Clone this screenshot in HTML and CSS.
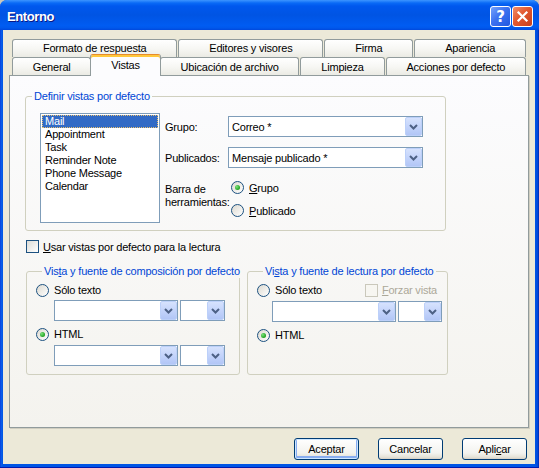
FILE: index.html
```html
<!DOCTYPE html>
<html lang="es">
<head>
    <meta charset="UTF-8">
    <title>Entorno</title>
    <link rel="stylesheet" href="styles.css">
</head>
<body>
    <div class="window">
        <div class="titlebar">
            <span class="title">Entorno</span>
            <div class="caption-buttons">
                <span class="cap-btn help">?</span>
                <span class="cap-btn close">
                    <svg width="13" height="13" viewBox="0 0 13 13"><path d="M2.5 2.5 L10.5 10.5 M10.5 2.5 L2.5 10.5" stroke="#fff" stroke-width="2.2" stroke-linecap="square"/></svg>
                </span>
            </div>
        </div>

        <div class="client">
            <div class="tabs">
                <div class="tab-row back">
                    <div class="tab">Formato de respuesta</div>
                    <div class="tab">Editores y visores</div>
                    <div class="tab">Firma</div>
                    <div class="tab">Apariencia</div>
                </div>
                <div class="tab-row">
                    <div class="tab">General</div>
                    <div class="tab active">Vistas</div>
                    <div class="tab">Ubicación de archivo</div>
                    <div class="tab">Limpieza</div>
                    <div class="tab">Acciones por defecto</div>
                </div>
            </div>

            <div class="page">
                <fieldset class="group group-views">
                    <legend>Definir vistas por defecto</legend>
                    <div class="views-body">
                        <ul class="listbox">
                            <li class="selected">Mail</li>
                            <li>Appointment</li>
                            <li>Task</li>
                            <li>Reminder Note</li>
                            <li>Phone Message</li>
                            <li>Calendar</li>
                        </ul>
                        <div class="view-fields">
                            <span class="field-label">Grupo:</span>
                            <div class="combo">
                                <span class="combo-text">Correo *</span>
                                <span class="combo-arrow"><svg width="9" height="6" viewBox="0 0 9 6"><path d="M1 1 L4.5 4.5 L8 1" stroke="#4D6185" stroke-width="2" fill="none"/></svg></span>
                            </div>
                            <span class="field-label">Publicados:</span>
                            <div class="combo">
                                <span class="combo-text">Mensaje publicado *</span>
                                <span class="combo-arrow"><svg width="9" height="6" viewBox="0 0 9 6"><path d="M1 1 L4.5 4.5 L8 1" stroke="#4D6185" stroke-width="2" fill="none"/></svg></span>
                            </div>
                            <span class="field-label toolbar-label">Barra de<br>herramientas:</span>
                            <div class="radio-stack">
                                <div class="option"><span class="radio checked"></span><u>G</u>rupo</div>
                                <div class="option"><span class="radio"></span><u>P</u>ublicado</div>
                            </div>
                        </div>
                    </div>
                </fieldset>

                <div class="option check-row"><span class="checkbox"></span><u>U</u>sar vistas por defecto para la lectura</div>

                <div class="font-groups">
                    <fieldset class="group group-compose">
                        <legend>Vis<u>t</u>a y fuente de composición por defecto</legend>
                        <div class="option radio-row"><span class="radio"></span>Sólo texto</div>
                        <div class="combo-row">
                            <div class="combo combo-font"><span class="combo-text"></span><span class="combo-arrow"><svg width="9" height="6" viewBox="0 0 9 6"><path d="M1 1 L4.5 4.5 L8 1" stroke="#4D6185" stroke-width="2" fill="none"/></svg></span></div>
                            <div class="combo combo-size"><span class="combo-text"></span><span class="combo-arrow"><svg width="9" height="6" viewBox="0 0 9 6"><path d="M1 1 L4.5 4.5 L8 1" stroke="#4D6185" stroke-width="2" fill="none"/></svg></span></div>
                        </div>
                        <div class="option radio-row second"><span class="radio checked"></span>HTML</div>
                        <div class="combo-row">
                            <div class="combo combo-font"><span class="combo-text"></span><span class="combo-arrow"><svg width="9" height="6" viewBox="0 0 9 6"><path d="M1 1 L4.5 4.5 L8 1" stroke="#4D6185" stroke-width="2" fill="none"/></svg></span></div>
                            <div class="combo combo-size"><span class="combo-text"></span><span class="combo-arrow"><svg width="9" height="6" viewBox="0 0 9 6"><path d="M1 1 L4.5 4.5 L8 1" stroke="#4D6185" stroke-width="2" fill="none"/></svg></span></div>
                        </div>
                    </fieldset>

                    <fieldset class="group group-read">
                        <legend>Vi<u>s</u>ta y fuente de lectura por defecto</legend>
                        <div class="option radio-row">
                            <span class="radio"></span>Sólo texto
                            <span class="force"><span class="checkbox disabled"></span><u>F</u>orzar vista</span>
                        </div>
                        <div class="combo-row">
                            <div class="combo combo-font"><span class="combo-text"></span><span class="combo-arrow"><svg width="9" height="6" viewBox="0 0 9 6"><path d="M1 1 L4.5 4.5 L8 1" stroke="#4D6185" stroke-width="2" fill="none"/></svg></span></div>
                            <div class="combo combo-size narrow"><span class="combo-text"></span><span class="combo-arrow"><svg width="9" height="6" viewBox="0 0 9 6"><path d="M1 1 L4.5 4.5 L8 1" stroke="#4D6185" stroke-width="2" fill="none"/></svg></span></div>
                        </div>
                        <div class="option radio-row second"><span class="radio checked"></span>HTML</div>
                    </fieldset>
                </div>
            </div>

            <div class="buttons">
                <button class="btn default">Aceptar</button>
                <button class="btn">Cancelar</button>
                <button class="btn">Apli<u>c</u>ar</button>
            </div>
        </div>
    </div>
</body>
</html>
```

FILE: styles.css
```css
* {
    box-sizing: border-box;
}
body {
    margin: 0;
    background: #c9c7bd;
    font-family: "Liberation Sans", Arial, sans-serif;
    font-size: 11px;
    letter-spacing: -0.2px;
    color: #000;
}
u {
    text-decoration: underline;
    text-underline-offset: 1px;
}

/* window frame */
.window {
    width: 539px;
    height: 468px;
    display: flex;
    flex-direction: column;
    padding: 0 4px 4px 3px;
    background: linear-gradient(to right, #0831d9 0, #0a5fe8 1px, #0055e5 3px, #0055e5 535px, #0046d8 538px, #001ea0 539px);
    border-radius: 7px 7px 0 0;
    box-shadow: inset 0 -1px #0019b0;
}
.titlebar {
    height: 30px;
    margin: 0 -4px 0 -3px;
    padding: 3px 6px 0 7px;
    display: flex;
    align-items: center;
    justify-content: space-between;
    border-radius: 7px 7px 0 0;
    background: linear-gradient(#3d95ff 0, #0a6af6 3px, #0058ee 6px, #0054e3 50%, #005cf2 85%, #0058ec 93%, #0048dc 100%);
}
.title {
    color: #fff;
    font-weight: bold;
    font-size: 13px;
    letter-spacing: -0.4px;
    text-shadow: 1px 1px #0a1883;
}
.caption-buttons {
    display: flex;
    gap: 1px;
}
.cap-btn {
    width: 21px;
    height: 21px;
    border: 1px solid #fff;
    border-radius: 3px;
    display: flex;
    align-items: center;
    justify-content: center;
    color: #fff;
}
.cap-btn.help {
    background: linear-gradient(135deg, #74a2fb 0, #3c72f0 45%, #2257e0 100%);
    font-family: "DejaVu Sans", sans-serif;
    font-weight: bold;
    font-size: 15px;
}
.cap-btn.close {
    background: linear-gradient(135deg, #f08e6a 0, #e1572f 45%, #c8401c 100%);
}

/* dialog area */
.client {
    flex: 1;
    display: flex;
    flex-direction: column;
    background: #ece9d8;
    padding: 9px 6px 4px 6px;
}

/* tabs */
.tabs {
    padding: 0 3px;
}
.tab-row {
    display: flex;
    gap: 1px;
    height: 18px;
}
.tab {
    flex: 1 1 auto;
    padding: 1px 6px 0;
    border: 1px solid #919b9c;
    border-bottom: none;
    border-radius: 3px 3px 0 0;
    background: linear-gradient(#ffffff, #f7f7f4 50%, #ebebe4);
    display: flex;
    align-items: center;
    justify-content: center;
    white-space: nowrap;
}
.tab-row.back .tab {
    padding: 0 6px 2px;
}
.tab.active {
    position: relative;
    z-index: 1;
    height: 22px;
    margin: -3px -2px -1px;
    align-items: flex-start;
    padding-top: 4px;
    background: #fcfcfe;
    border-top: 1px solid #e68b2c;
    box-shadow: inset 0 2px #ffc83c;
}

/* tab page */
.page {
    height: 353px;
    border: 1px solid #919b9c;
    background: linear-gradient(#fcfcfe, #f4f3ee);
    box-shadow: 1px 1px #d0cec0;
    padding: 14px 0 0 15px;
}
.group {
    margin: 0;
    padding: 0;
    min-width: 0;
    border: 1px solid #d0d0bf;
    border-radius: 3px;
}
.group legend {
    color: #0046d5;
    line-height: 13px;
    padding: 0 2px;
    margin-left: 6px;
    white-space: nowrap;
}
.group-views {
    width: 421px;
    padding-bottom: 7px;
}
.views-body {
    display: flex;
    padding: 10px 0 0 14px;
}
.listbox {
    list-style: none;
    margin: 0;
    padding: 1px;
    width: 120px;
    height: 110px;
    border: 1px solid #7f9db9;
    background: #fff;
}
.listbox li {
    line-height: 13px;
    padding-left: 3px;
}
.listbox li.selected {
    background: #316ac5;
    color: #fff;
    outline: 1px dotted #e8c070;
    outline-offset: -1px;
}
.view-fields {
    margin-left: 5px;
    display: grid;
    grid-template-columns: 63px 195px;
    align-items: center;
    row-gap: 10px;
    align-content: start;
    padding-top: 3px;
}
.toolbar-label {
    align-self: start;
    line-height: 13px;
    margin-top: 5px;
    white-space: nowrap;
}
.radio-stack {
    margin-top: -2px;
    padding-left: 3px;
}
.radio-stack .option {
    height: 23px;
}

/* controls */
.option {
    display: flex;
    align-items: center;
    white-space: nowrap;
}
.radio {
    width: 13px;
    height: 13px;
    border: 1px solid #1c5180;
    border-radius: 50%;
    background: linear-gradient(135deg, #dcd9d0, #fff);
    margin-right: 5px;
    flex: none;
    display: flex;
    align-items: center;
    justify-content: center;
}
.radio.checked::after {
    content: "";
    width: 5px;
    height: 5px;
    border-radius: 50%;
    background: radial-gradient(circle at 35% 35%, #7be37b, #21a121 70%);
}
.checkbox {
    width: 13px;
    height: 13px;
    border: 1px solid #1c5180;
    background: linear-gradient(135deg, #dcdcd7, #fff);
    margin-right: 4px;
    flex: none;
}
.checkbox.disabled {
    border-color: #cac8bb;
    background: #f7f6f1;
}
.combo {
    height: 21px;
    border: 1px solid #7f9db9;
    background: #fff;
    display: flex;
    align-items: center;
}
.combo-text {
    flex: 1;
    padding-left: 3px;
    white-space: nowrap;
    overflow: hidden;
}
.combo-arrow {
    width: 17px;
    height: 19px;
    border: 1px solid #bcd0f9;
    border-radius: 2px;
    background: linear-gradient(#d6e2fd, #c0d1fa 60%, #b2c6f6);
    display: flex;
    align-items: center;
    justify-content: center;
    flex: none;
}

.check-row {
    height: 13px;
    margin: 9px 0 0 1px;
}

/* lower groups */
.font-groups {
    display: flex;
    gap: 7px;
    margin: 12px 0 0 1px;
}
.group-compose,
.group-read {
    height: 110px;
    padding: 4px 0 0 9px;
}
.group-compose {
    width: 214px;
}
.group-read {
    width: 201px;
}
.radio-row {
    height: 16px;
}
.radio-row.second {
    margin-top: 5px;
}
.combo-row {
    display: flex;
    gap: 2px;
    margin-top: 2px;
    padding-left: 18px;
}
.radio-row.second + .combo-row {
    margin-top: 3px;
}
.group-read .combo-row {
    padding-left: 15px;
    margin-top: 3px;
}
.combo-font {
    width: 124px;
}
.combo-size {
    width: 45px;
}
.combo-size.narrow {
    width: 44px;
}
.force {
    display: flex;
    align-items: center;
    margin-left: auto;
    margin-right: 10px;
    color: #aca899;
}

/* dialog buttons */
.buttons {
    display: flex;
    justify-content: flex-end;
    gap: 19px;
    margin-top: 10px;
    padding-right: 2px;
}
.btn {
    width: 65px;
    height: 22px;
    padding: 0;
    font-family: inherit;
    font-size: 11px;
    letter-spacing: -0.2px;
    color: #000;
    border: 1px solid #003c74;
    border-radius: 3px;
    background: linear-gradient(#ffffff, #f3f3ef 70%, #e6e3d8 90%, #d6d0c5);
}
.btn.default {
    box-shadow: inset 0 0 0 1px #cee7ff, inset 0 -1px 0 2px #89adf0;
}
```
